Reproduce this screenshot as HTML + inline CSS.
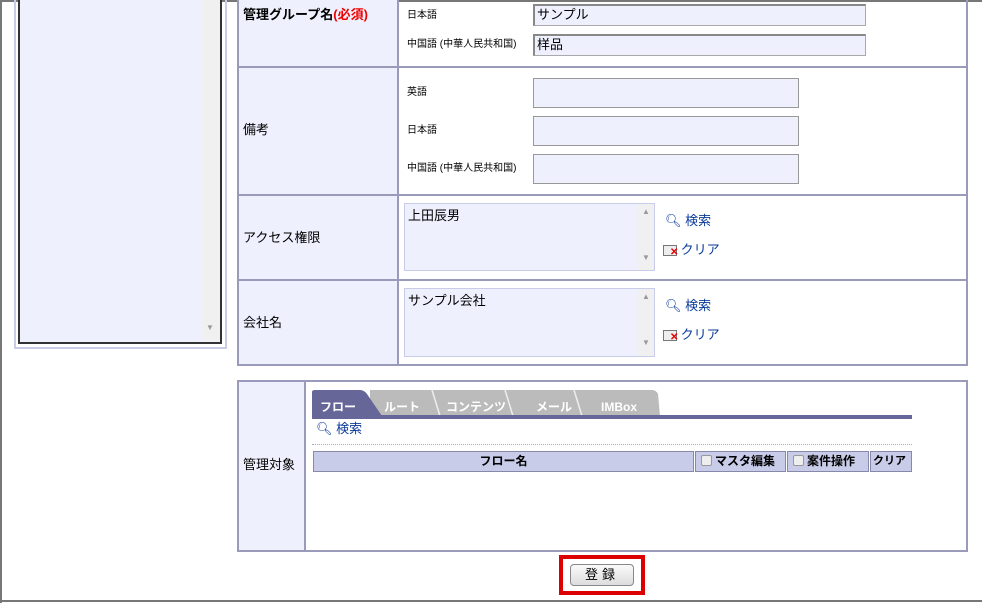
<!DOCTYPE html>
<html><head><meta charset="utf-8"><style>
*{margin:0;padding:0;box-sizing:border-box}
body{width:982px;height:603px;background:#fff;position:relative;overflow:hidden;font-family:"Liberation Sans","Noto Sans CJK JP",sans-serif;font-size:12px;color:#000}
.a{position:absolute}
.t{position:absolute;white-space:nowrap;line-height:14px}
.s{font-size:10px}
.inp{position:absolute;background:#eef1fd;border:1px solid #aaa;border-top:2px solid #888;border-left:2px solid #888}
.ta{position:absolute;background:#eef1fd;border:1px solid #999}
.lb{position:absolute;background:#eef1fd;border:1px solid #c8cce8}
.sb{position:absolute;right:0;top:0;bottom:0;width:16px;background:#f0f0f0;color:#999;font-size:8px;text-align:center}
.link{color:#0a3a99}
.hd{position:absolute;background:#c8cce8;border:1px solid #8888aa;top:451px;height:21px;font-weight:bold;font-size:12px;line-height:19px;white-space:nowrap;overflow:hidden}
.cb{display:inline-block;width:11px;height:11px;border:1px solid #999;background:#eee;border-radius:2px;vertical-align:-1px;margin:0 3px 0 5px}
</style></head><body>
<div class="a" style="left:0;top:0;width:982px;height:2px;background:#777"></div>
<div class="a" style="left:0;top:0;width:2px;height:603px;background:#777"></div>
<div class="a" style="left:0;top:600px;width:982px;height:2px;background:#777"></div>

<div class="a" style="left:14px;top:0;width:213px;height:349px;border:2px solid #c8cce8;border-top:none"></div>
<div class="a" style="left:18px;top:0;width:204px;height:344px;border:2px solid #333;border-top:none;background:#eef1fd"></div>
<div class="a" style="left:202px;top:0;width:18px;height:341px;background:#f0f0f0;color:#999;font-size:8px;text-align:center"><span style="position:absolute;left:4px;top:323px">▼</span></div>

<div class="a" style="left:237px;top:0;width:731px;height:366px;border:2px solid #9a9abb;border-top:none"></div>
<div class="a" style="left:239px;top:0;width:160px;height:364px;background:#eef1fd;border-right:2px solid #9a9abb"></div>
<div class="a" style="left:239px;top:66px;width:727px;height:2px;background:#9a9abb"></div>
<div class="a" style="left:239px;top:194px;width:727px;height:2px;background:#9a9abb"></div>
<div class="a" style="left:239px;top:279px;width:727px;height:2px;background:#9a9abb"></div>

<div class="t" style="left:243px;top:8px;font-weight:bold;font-size:13px">管理グループ名<span style="color:#e00">(必須)</span></div>
<div class="t s" style="left:407px;top:9px">日本語</div>
<div class="inp" style="left:533px;top:4px;width:333px;height:22px;padding-left:2px;font-size:13px;line-height:18px">サンプル</div>
<div class="t s" style="left:407px;top:38px">中国語 (中華人民共和国)</div>
<div class="inp" style="left:533px;top:34px;width:333px;height:22px;padding-left:2px;font-size:13px;line-height:18px">样品</div>

<div class="t" style="left:243px;top:123px;font-size:13px">備考</div>
<div class="t s" style="left:407px;top:86px">英語</div>
<div class="ta" style="left:533px;top:78px;width:266px;height:30px"></div>
<div class="t s" style="left:407px;top:124px">日本語</div>
<div class="ta" style="left:533px;top:116px;width:266px;height:30px"></div>
<div class="t s" style="left:407px;top:162px">中国語 (中華人民共和国)</div>
<div class="ta" style="left:533px;top:154px;width:266px;height:30px"></div>

<div class="t" style="left:243px;top:231px;font-size:13px">アクセス権限</div>
<div class="lb" style="left:404px;top:203px;width:251px;height:68px;padding:1px 3px;font-size:13px">上田辰男<div class="sb"><div style="margin-top:3px">▲</div><div style="margin-top:37px">▼</div></div></div>
<div class="t link" style="left:665px;top:214px;font-size:13px">🔍︎ 検索</div>
<div class="t link" style="left:663px;top:243px;font-size:13px"><span style="display:inline-block;width:14px;height:11px;border:1px solid #777;background:#eee;position:relative;vertical-align:-2px"><span style="position:absolute;left:6px;top:2px;color:#e00;font-size:10px;font-weight:bold;line-height:10px">✕</span></span> クリア</div>

<div class="t" style="left:243px;top:316px;font-size:13px">会社名</div>
<div class="lb" style="left:404px;top:288px;width:251px;height:69px;padding:1px 3px;font-size:13px">サンプル会社<div class="sb"><div style="margin-top:3px">▲</div><div style="margin-top:37px">▼</div></div></div>
<div class="t link" style="left:665px;top:299px;font-size:13px">🔍︎ 検索</div>
<div class="t link" style="left:663px;top:328px;font-size:13px"><span style="display:inline-block;width:14px;height:11px;border:1px solid #777;background:#eee;position:relative;vertical-align:-2px"><span style="position:absolute;left:6px;top:2px;color:#e00;font-size:10px;font-weight:bold;line-height:10px">✕</span></span> クリア</div>

<div class="a" style="left:237px;top:380px;width:731px;height:172px;border:2px solid #9a9abb"></div>
<div class="a" style="left:239px;top:382px;width:67px;height:168px;background:#eef1fd;border-right:2px solid #9a9abb"></div>
<div class="t" style="left:243px;top:458px;font-size:13px">管理対象</div>

<svg class="a" style="left:312px;top:389px" width="350" height="32">
<path d="M58 27 L58 1 L340 1 Q344 1 346 5 L348 27 Z" fill="#bbb"/>
<path d="M120 1 L128 27 M193 1 L201 27 M262 1 L270 27" stroke="#eee" stroke-width="1.5"/>
<path d="M0 27 L0 3 Q0 1 3 1 L48 1 Q52 1 55 5 L70 27 Z" fill="#666699"/>
<rect x="0" y="26" width="600" height="4" fill="#666699"/>
<g font-family="Liberation Sans,Noto Sans CJK JP,sans-serif" font-size="12" font-weight="bold" fill="#fff">
<text x="8" y="22">フロー</text>
<text x="72" y="22">ルート</text>
<text x="134" y="22">コンテンツ</text>
<text x="224" y="22">メール</text>
<text x="289" y="22">IMBox</text>
</g></svg>
<div class="a" style="left:650px;top:415px;width:262px;height:4px;background:#666699"></div>
<div class="t link" style="left:316px;top:422px;font-size:13px">🔍︎ 検索</div>
<div class="a" style="left:312px;top:444px;width:600px;border-top:1px dotted #aab"></div>
<div class="hd" style="left:313px;width:381px;text-align:center">フロー名</div>
<div class="hd" style="left:695px;width:91px"><span class="cb"></span>マスタ編集</div>
<div class="hd" style="left:787px;width:82px"><span class="cb"></span>案件操作</div>
<div class="hd" style="left:870px;width:42px;padding-left:2px;font-size:11px">クリア</div>

<div class="a" style="left:559px;top:555px;width:86px;height:40px;border:4px solid #d00"></div>
<div class="a" style="left:570px;top:564px;width:64px;height:22px;border:1px solid #888;border-radius:4px;background:linear-gradient(#fafafa,#ddd);text-align:center;font-size:13px;line-height:20px;letter-spacing:4px">登録</div>
</body></html>
